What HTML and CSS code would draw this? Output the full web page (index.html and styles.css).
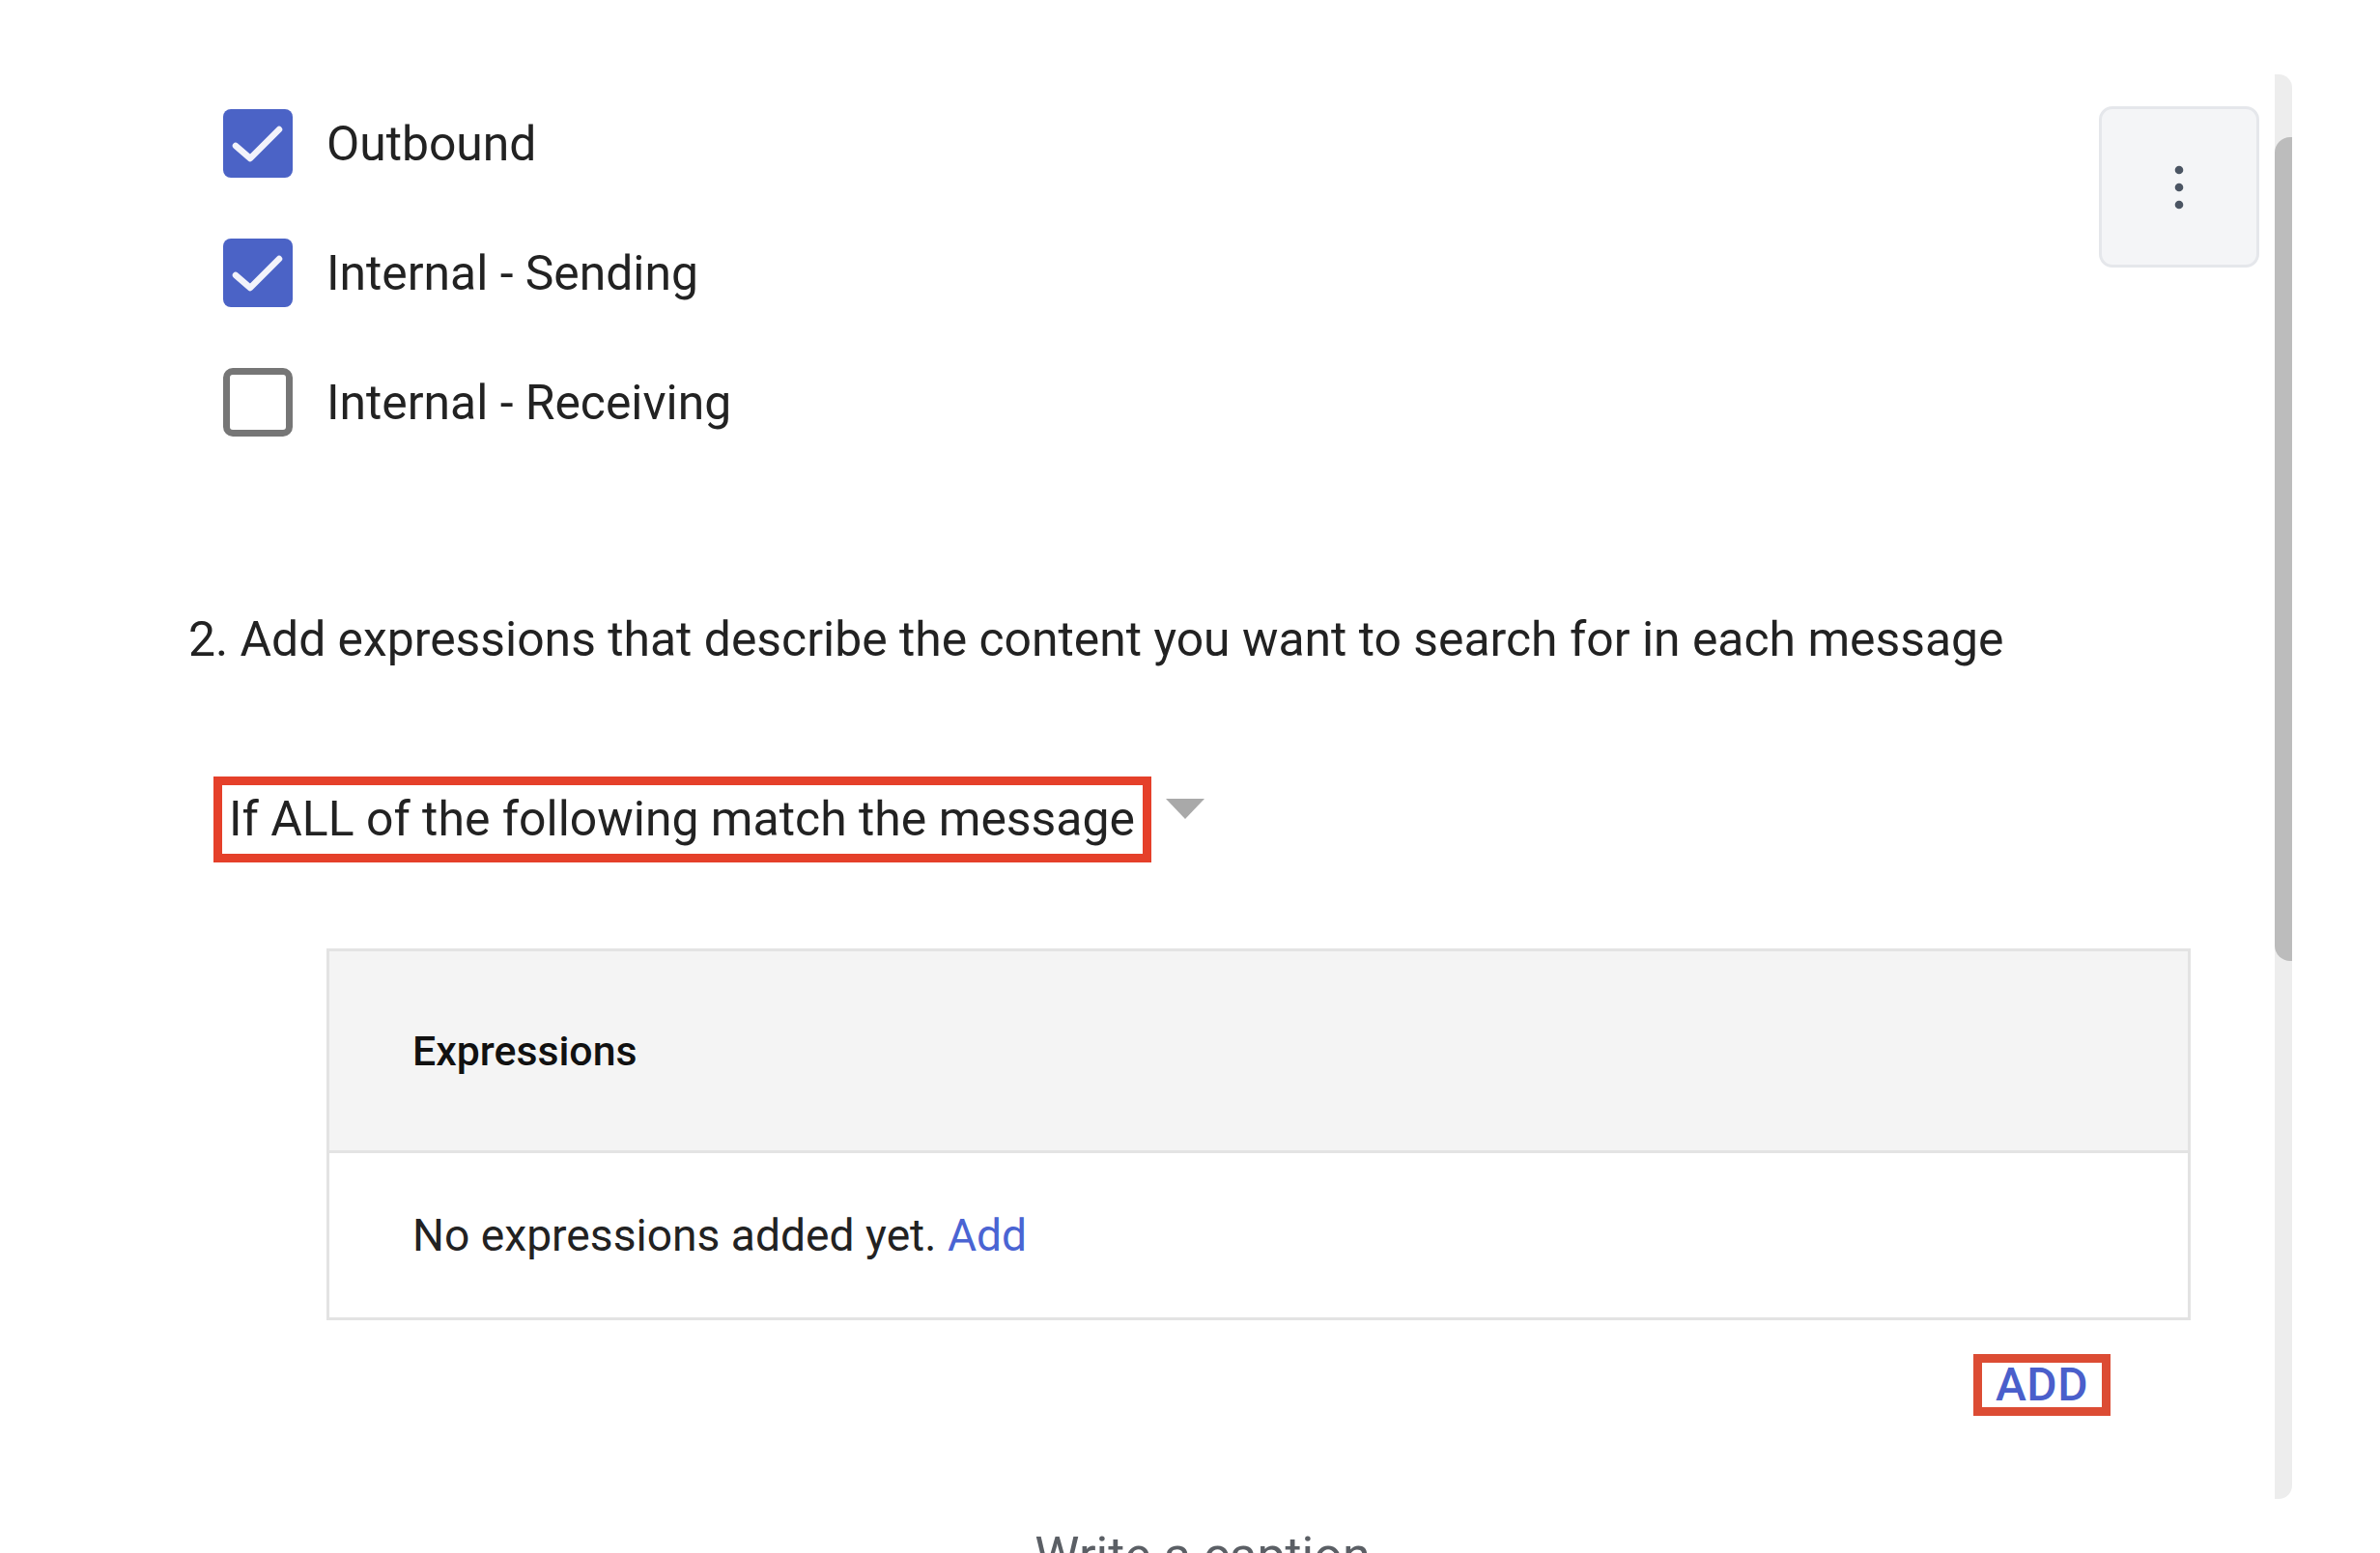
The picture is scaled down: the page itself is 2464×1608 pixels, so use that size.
FILE: index.html
```html
<!DOCTYPE html>
<html lang="en">
<head>
<meta charset="utf-8">
<title>Content compliance</title>
<link rel="stylesheet" href="styles.css">
</head>
<body>
<div class="page">
  <div class="frame">
    <div class="main">
      <div class="top">
        <div class="checks">
          <label class="check-row">
            <span class="box box-on">
              <svg viewBox="0 0 72 70" width="72" height="70"><polyline points="13,37 28,50 58,20" fill="none" stroke="#f2f3fb" stroke-width="6.5" stroke-linecap="round" stroke-linejoin="round"/></svg>
            </span>
            <span class="check-label">Outbound</span>
          </label>
          <label class="check-row">
            <span class="box box-on">
              <svg viewBox="0 0 72 70" width="72" height="70"><polyline points="13,37 28,50 58,20" fill="none" stroke="#f2f3fb" stroke-width="6.5" stroke-linecap="round" stroke-linejoin="round"/></svg>
            </span>
            <span class="check-label">Internal - Sending</span>
          </label>
          <label class="check-row">
            <span class="box box-off"></span>
            <span class="check-label">Internal - Receiving</span>
          </label>
        </div>
        <button class="kebab" type="button" aria-label="More options">
          <svg viewBox="0 0 20 50" width="20" height="50"><circle cx="10" cy="7" r="4.3" fill="#4b5563"/><circle cx="10" cy="25" r="4.3" fill="#4b5563"/><circle cx="10" cy="43" r="4.3" fill="#4b5563"/></svg>
        </button>
      </div>

      <p class="step">2. Add expressions that describe the content you want to search for in each message</p>

      <div class="match">
        <div class="match-box">If ALL of the following match the message</div>
        <span class="caret"></span>
      </div>

      <div class="table">
        <div class="thead">Expressions</div>
        <div class="tbody">No expressions added yet. <span class="link">Add</span></div>
      </div>

      <div class="add-row">
        <span class="add-btn">ADD</span>
      </div>
    </div>
    <div class="scrollbar"><div class="thumb"></div></div>
  </div>
  <div class="caption">Write a caption</div>
</div>
</body>
</html>
```

FILE: styles.css
```css
html, body {
  margin: 0;
  padding: 0;
  background: #ffffff;
  overflow: hidden;
}

.page {
  width: 2464px;
  height: 1608px;
  overflow: hidden;
  font-family: Roboto, "Liberation Sans", Arial, sans-serif;
  color: #222222;
}

.frame {
  display: flex;
  align-items: flex-start;
}

.main {
  width: 2339px;
  flex: none;
}

.top {
  display: flex;
  justify-content: space-between;
  align-items: flex-start;
}

.checks {
  padding-top: 113px;
  padding-left: 231px;
  display: flex;
  flex-direction: column;
  gap: 63px;
}

.check-row {
  display: flex;
  align-items: center;
  height: 71px;
  gap: 35px;
}

.box {
  width: 72px;
  height: 71px;
  box-sizing: border-box;
  border-radius: 8px;
  display: flex;
  align-items: center;
  justify-content: center;
  flex: none;
}

.box-on {
  background: #4b63c6;
}

.box-off {
  border: 7px solid #767676;
  border-radius: 10px;
  background: #ffffff;
}

.check-label {
  font-size: 49.8px;
  line-height: 60px;
  color: #222222;
}

.kebab {
  margin-top: 110px;
  width: 166px;
  height: 167px;
  box-sizing: border-box;
  background: #f4f5f7;
  border: 3px solid #e5e7eb;
  border-radius: 14px;
  display: flex;
  align-items: center;
  justify-content: center;
  padding: 0;
}

.step {
  margin: 180px 0 0 0;
  padding-left: 195px;
  font-size: 49.85px;
  line-height: 60px;
  color: #222222;
}

.match {
  margin-top: 112px;
  padding-left: 221px;
  display: flex;
  align-items: flex-start;
}

.match-box {
  border: 9px solid #e5402a;
  height: 71px;
  padding: 0 8px 0 7px;
  font-size: 49.9px;
  line-height: 71px;
  color: #222222;
  white-space: nowrap;
}

.caret {
  margin-top: 23px;
  margin-left: 15px;
  width: 0;
  height: 0;
  border-left: 20px solid transparent;
  border-right: 20px solid transparent;
  border-top: 21px solid #a9a9a9;
}

.table {
  margin-top: 89px;
  margin-left: 338px;
  width: 1930px;
  box-sizing: border-box;
  border: 3px solid #e3e3e3;
}

.thead {
  height: 206px;
  background: #f4f4f4;
  border-bottom: 3px solid #e3e3e3;
  display: flex;
  align-items: center;
  padding-left: 86px;
  font-size: 42.8px;
  font-weight: 500;
  color: #111111;
}

.tbody {
  height: 170px;
  display: flex;
  align-items: center;
  padding-left: 86px;
  font-size: 46.2px;
  color: #222222;
  white-space: pre;
}

.link {
  color: #4a64d3;
}

.add-row {
  margin-top: 35px;
  display: flex;
  justify-content: flex-end;
  padding-right: 154px;
}

.add-btn {
  border: 9px solid #dc4c34;
  height: 46px;
  width: 124px;
  box-sizing: content-box;
  display: flex;
  align-items: center;
  justify-content: center;
  font-size: 48px;
  font-weight: 500;
  line-height: 46px;
  color: #4a5fcb;
  letter-spacing: 0.5px;
}

.scrollbar {
  margin-top: 77px;
  margin-left: 16px;
  width: 18px;
  height: 1475px;
  background: #ededed;
  border-radius: 0 14px 14px 0;
  flex: none;
  padding-top: 65px;
  box-sizing: border-box;
}

.thumb {
  height: 853px;
  background: #bcbcbc;
  border-radius: 16px 0 0 16px;
}

.caption {
  margin-top: 33px;
  padding-left: 26px;
  text-align: center;
  font-size: 52px;
  line-height: 52px;
  color: #5b5f65;
}
```
